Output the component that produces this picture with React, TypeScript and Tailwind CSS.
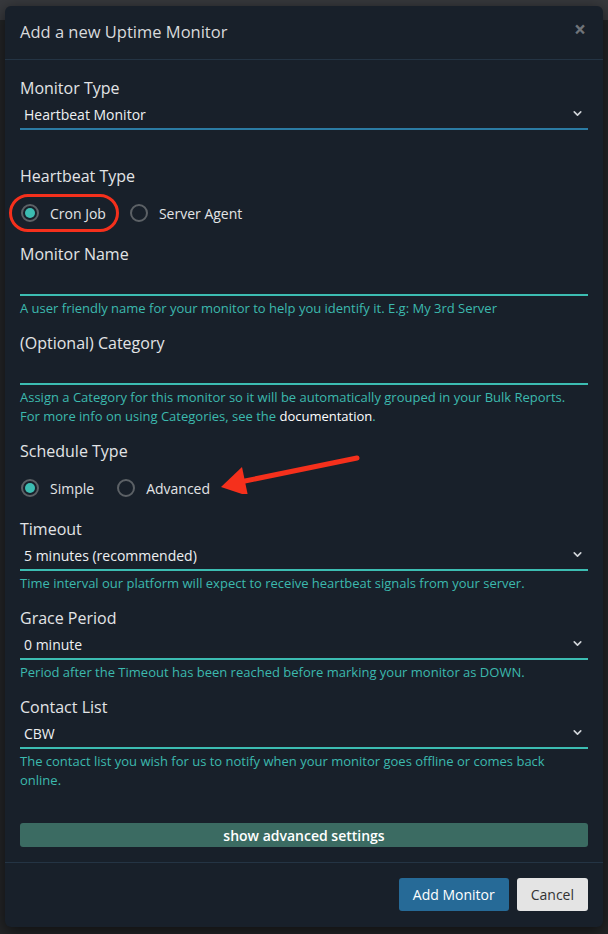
import { ChevronDown } from 'lucide-react'

const font = { fontFamily: '"Open Sans", "Noto Sans", sans-serif' }

function Label({ children }: { children: React.ReactNode }) {
  return <div className="h-[22px] text-[16px] leading-[22px] text-[#e2e4e6]">{children}</div>
}

function Help({ children }: { children: React.ReactNode }) {
  return <div className="pt-[3px] text-[13px] leading-[19px] text-[#3cb9ae]">{children}</div>
}

function Select({ value, color = 'border-[#3cbdb2]' }: { value: string; color?: string }) {
  return (
    <div className={`flex h-[31px] items-center justify-between border-b-2 ${color} pl-[4px] pr-[4px]`}>
      <span className="pt-[1px] text-[14px] text-[#eef0f2]">{value}</span>
      <ChevronDown className="h-[13px] w-[13px] text-[#d0d4d8]" strokeWidth={3} />
    </div>
  )
}

function Input() {
  return <div className="h-[31px] border-b-2 border-[#3cbdb2]" />
}

function Radio({ label, checked }: { label: string; checked?: boolean }) {
  return (
    <label className="flex items-center gap-[11px]">
      <span className="flex h-[18px] w-[18px] items-center justify-center rounded-full border-2 border-[#5c6166]">
        {checked && <span className="h-[10px] w-[10px] rounded-full bg-[#3cbdb2]" />}
      </span>
      <span className="text-[14px] text-[#e2e4e6]">{label}</span>
    </label>
  )
}

export default function App() {
  return (
    <div
      className="min-h-[934px] bg-[linear-gradient(to_bottom,#37393d_20px,#232527_20px)] pt-[6px] pb-[7px] px-[5px]"
      style={font}
    >
      <div className="rounded-[6px] bg-[#18202a] shadow-[0_4px_16px_rgba(0,0,0,0.6)]">
        {/* Header */}
        <div className="flex h-[54px] items-center justify-between border-b border-[#243444] pl-[15px] pr-[17px]">
          <h2 className="text-[16.5px] text-[#d8dadc]">Add a new Uptime Monitor</h2>
          <span className="mb-[6px] text-[21px] font-bold leading-none text-[#6f7479]">×</span>
        </div>

        {/* Body */}
        <div className="relative px-[15px] pt-[17px] pb-[15px]">
          <Label>Monitor Type</Label>
          <Select value="Heartbeat Monitor" color="border-[#2b7ba3]" />

          <div className="mt-[35px]">
            <Label>Heartbeat Type</Label>
          </div>
          <div className="mt-[14px] flex h-[24px] items-center gap-[24px] pl-[1px]">
            <div className="relative">
              <Radio label="Cron Job" checked />
              <span className="pointer-events-none absolute left-[-12px] top-[-9px] h-[38px] w-[110px] rounded-full border-[3px] border-[#f5301c]" />
            </div>
            <Radio label="Server Agent" />
          </div>

          <div className="mt-[18px]">
            <Label>Monitor Name</Label>
          </div>
          <Input />
          <Help>A user friendly name for your monitor to help you identify it. E.g: My 3rd Server</Help>

          <div className="mt-[14px]">
            <Label>(Optional) Category</Label>
          </div>
          <Input />
          <Help>
            Assign a Category for this monitor so it will be automatically grouped in your Bulk Reports.
            <br />
            For more info on using Categories, see the <span className="text-white">documentation</span>.
          </Help>

          <div className="mt-[14px]">
            <Label>Schedule Type</Label>
          </div>
          <div className="relative mt-[14px] flex h-[24px] items-center gap-[23px] pl-[1px]">
            <Radio label="Simple" checked />
            <Radio label="Advanced" />
            <svg
              className="pointer-events-none absolute left-[198px] top-[-22px]"
              width="145"
              height="40"
              viewBox="0 0 145 40"
            >
              <line x1="139" y1="4" x2="22" y2="28" stroke="#f5301c" strokeWidth="5" strokeLinecap="round" />
              <polygon points="3,33 24,13 30,42" fill="#f5301c" />
            </svg>
          </div>

          <div className="mt-[18px]">
            <Label>Timeout</Label>
          </div>
          <Select value="5 minutes (recommended)" />
          <Help>Time interval our platform will expect to receive heartbeat signals from your server.</Help>

          <div className="mt-[14px]">
            <Label>Grace Period</Label>
          </div>
          <Select value="0 minute" />
          <Help>Period after the Timeout has been reached before marking your monitor as DOWN.</Help>

          <div className="mt-[14px]">
            <Label>Contact List</Label>
          </div>
          <Select value="CBW" />
          <Help>
            The contact list you wish for us to notify when your monitor goes offline or comes back
            <br />
            online.
          </Help>

          <button className="mt-[33px] flex h-[24px] w-full items-center justify-center rounded-[3px] bg-[#3b6b62] text-[14px] font-semibold text-white">
            show advanced settings
          </button>
        </div>

        {/* Footer */}
        <div className="flex items-center justify-end gap-[8px] border-t border-[#243444] px-[15px] pt-[15px] pb-[16px]">
          <button className="h-[33px] rounded-[3px] bg-[#266a97] px-[14px] text-[14px] text-white">Add Monitor</button>
          <button className="h-[33px] rounded-[3px] bg-[#e4e4e4] px-[14px] text-[14px] text-[#333]">Cancel</button>
        </div>
      </div>
    </div>
  )
}
